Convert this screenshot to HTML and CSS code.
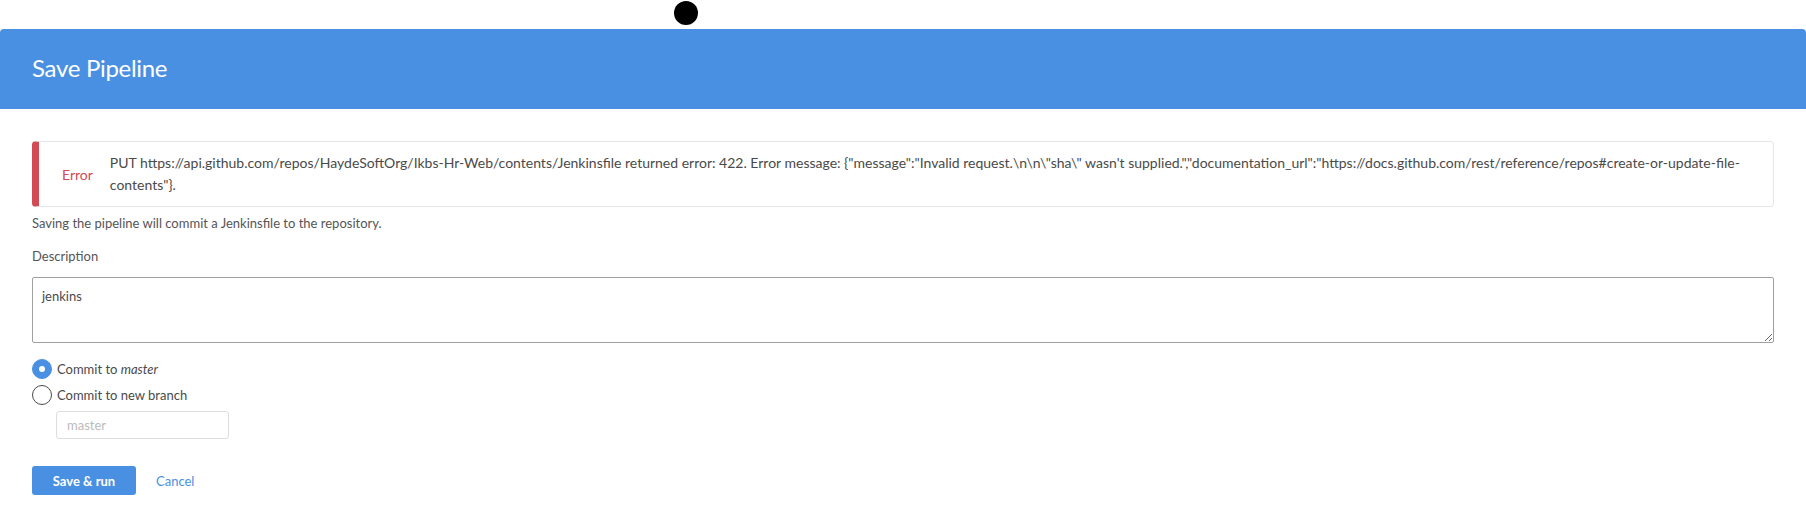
FILE: index.html
```html
<!DOCTYPE html>
<html>
<head>
<meta charset="utf-8">
<link rel="stylesheet" href="styles.css">
</head>
<body>
<div class="cursor-dot"></div>
<div class="dialog">
  <div class="dialog-header"><h1 class="dialog-title">Save Pipeline</h1></div>
  <div class="dialog-body">
    <div class="error-box">
      <div class="error-label">Error</div>
      <div class="error-message">PUT https://api.github.com/repos/HaydeSoftOrg/Ikbs-Hr-Web/contents/Jenkinsfile returned error: 422. Error message: {"message":"Invalid request.\n\n\"sha\" wasn't supplied.","documentation_url":"https://docs.github.com/rest/reference/repos#create-or-update-file-contents"}.</div>
    </div>
    <p class="hint">Saving the pipeline will commit a Jenkinsfile to the repository.</p>
    <label class="field-label">Description</label>
    <textarea class="description">jenkins</textarea>
    <div class="radio-group">
      <label class="radio-row"><span class="radio checked"></span><span>Commit to <em>master</em></span></label>
      <label class="radio-row"><span class="radio"></span><span>Commit to new branch</span></label>
      <input class="branch-input" type="text" placeholder="master">
    </div>
    <div class="actions">
      <button class="btn-primary">Save &amp; run</button>
      <a class="btn-link">Cancel</a>
    </div>
  </div>
</div>
</body>
</html>
```
FILE: styles.css
```css
html, body {
  margin: 0;
  padding: 0;
  background: #fff;
}
body {
  font-family: Lato, "Open Sans", sans-serif;
  color: #4a4a4a;
  font-size: 13px;
}
.cursor-dot {
  position: absolute;
  left: 674px;
  top: 1px;
  width: 24px;
  height: 24px;
  border-radius: 50%;
  background: #000;
}
.dialog {
  padding-top: 29px;
}
.dialog-header {
  box-sizing: border-box;
  height: 80px;
  background: #4a90e2;
  border-radius: 4px 4px 0 0;
  display: flex;
  align-items: center;
  padding: 0 0 4px 32px;
}
.dialog-title {
  margin: 0;
  color: #fff;
  font-size: 24px;
  font-weight: 400;
  letter-spacing: -0.3px;
}
.dialog-body {
  padding: 32px 32px 0 32px;
}
.error-box {
  display: flex;
  align-items: center;
  min-height: 64px;
  border: 1px solid #e6e6e6;
  border-left: 7px solid #d24a53;
  border-radius: 4px;
}
.error-label {
  color: #d24a53;
  font-size: 14px;
  padding: 0 17px 0 23px;
}
.error-message {
  color: #4a4a4a;
  font-size: 14px;
  line-height: 22px;
  padding-right: 20px;
}
.hint {
  margin: 8px 0 0 0;
  line-height: 16px;
  color: #555;
}
.field-label {
  display: block;
  margin-top: 17px;
  line-height: 16px;
  color: #555;
}
.description {
  display: block;
  box-sizing: border-box;
  width: 100%;
  height: 66px;
  margin-top: 13px;
  border: 1px solid #a0a0a0;
  border-radius: 2px;
  padding: 10px 9px;
  font-family: Lato, sans-serif;
  font-size: 13px;
  color: #4a4a4a;
}
.radio-group {
  margin-top: 13px;
  display: flex;
  flex-direction: column;
}
.radio-row {
  display: flex;
  align-items: center;
  gap: 5px;
  height: 26px;
  font-size: 13px;
  color: #4a4a4a;
}
.radio {
  box-sizing: border-box;
  width: 20px;
  height: 20px;
  border-radius: 50%;
  border: 1px solid #4a4a4a;
  display: inline-flex;
  align-items: center;
  justify-content: center;
}
.radio.checked {
  background: #4a90e2;
  border-color: #4a90e2;
}
.radio.checked::after {
  content: "";
  width: 6px;
  height: 6px;
  border-radius: 50%;
  background: #fff;
}
.branch-input {
  box-sizing: border-box;
  margin: 3px 0 0 24px;
  width: 173px;
  height: 28px;
  border: 1px solid #ddd;
  border-radius: 3px;
  padding: 0 10px;
  font-family: Lato, sans-serif;
  font-size: 13px;
}
.branch-input::placeholder {
  color: #bbb;
}
.actions {
  margin-top: 27px;
  display: flex;
  align-items: center;
  gap: 20px;
}
.btn-primary {
  width: 104px;
  height: 29px;
  border: none;
  border-radius: 3px;
  background: #4a90e2;
  color: #fff;
  font-family: Lato, sans-serif;
  font-size: 13px;
  font-weight: 700;
}
.btn-link {
  color: #4a90e2;
  font-size: 13px;
}
```
